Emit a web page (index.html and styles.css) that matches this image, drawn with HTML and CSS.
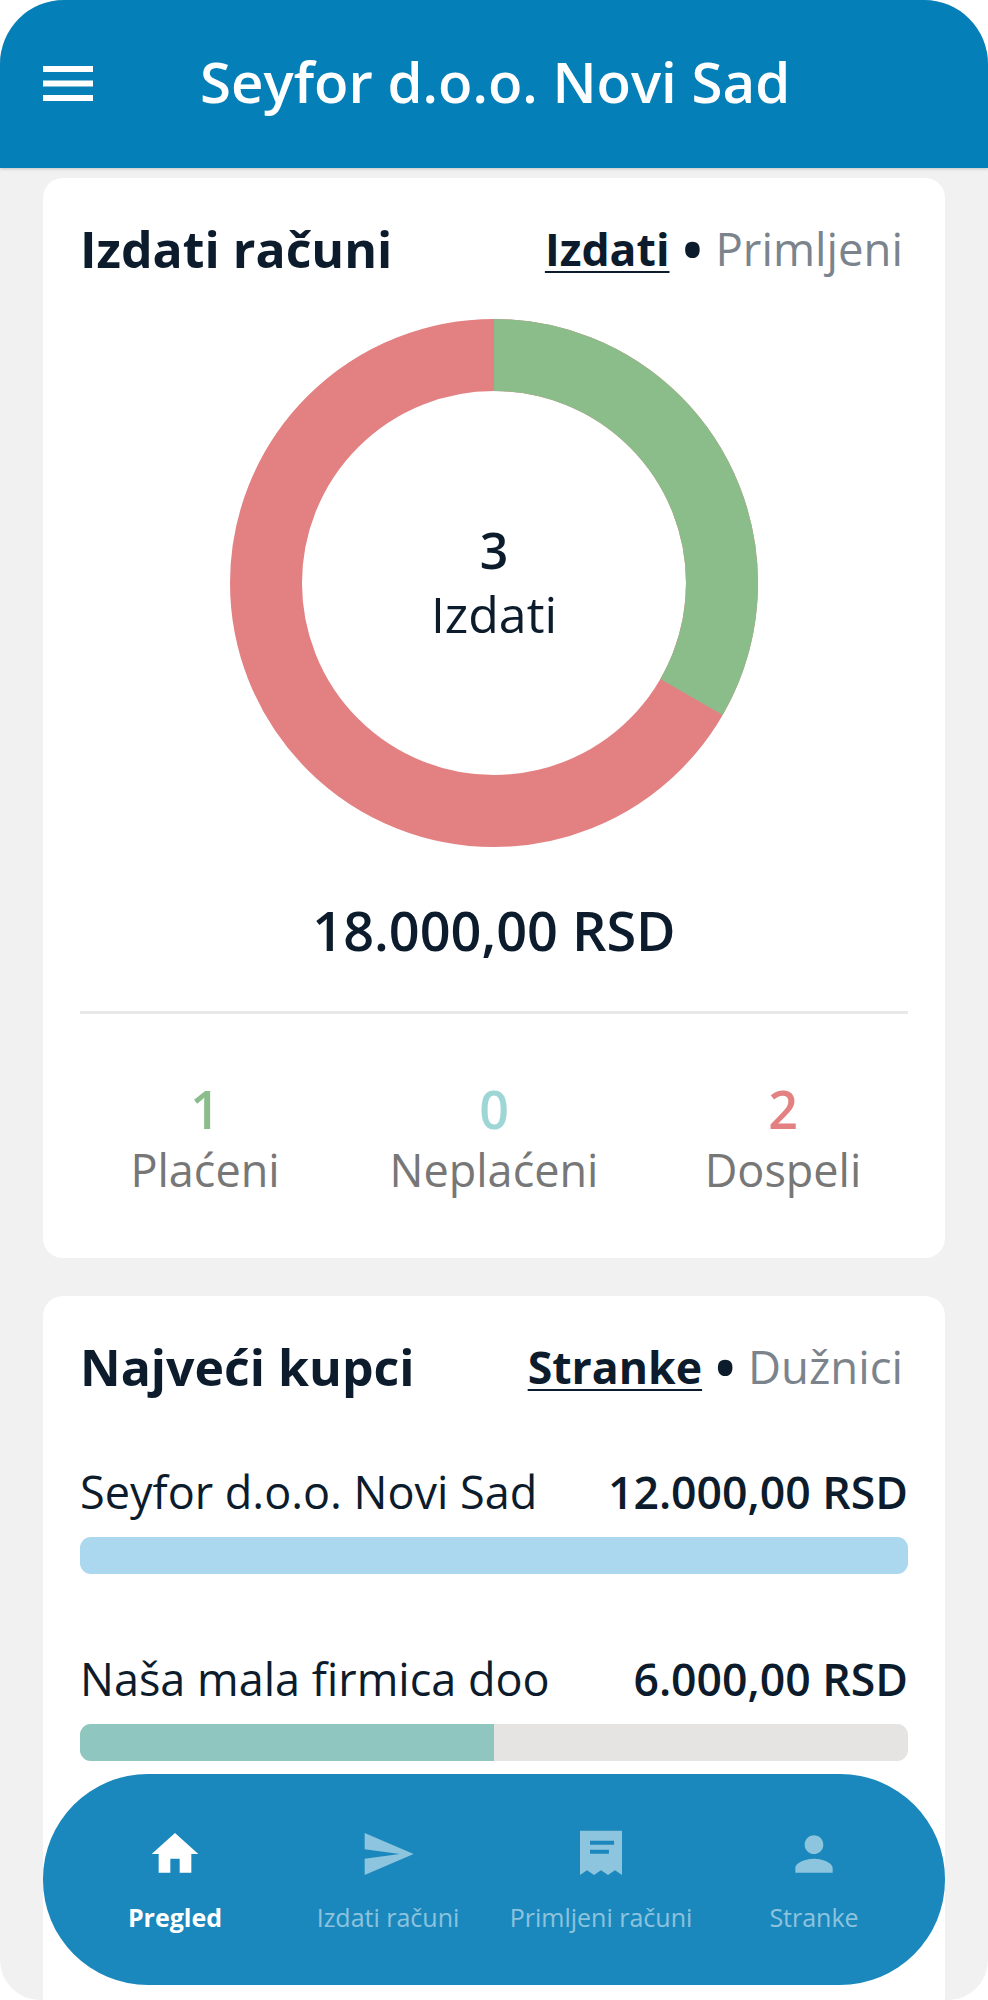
FILE: index.html
```html
<!DOCTYPE html>
<html lang="sr">
<head>
  <meta charset="utf-8">
  <title>Seyfor d.o.o. Novi Sad</title>
  <link rel="stylesheet" href="styles.css">
</head>
<body>
  <div class="screen">
    <header class="topbar">
      <svg class="menu-icon" viewBox="0 0 50 35" aria-hidden="true">
        <rect x="0" y="0" width="50" height="6"></rect>
        <rect x="0" y="14.5" width="50" height="6"></rect>
        <rect x="0" y="29" width="50" height="6"></rect>
      </svg>
      <h1>Seyfor d.o.o. Novi Sad</h1>
    </header>

    <main class="content">
      <section class="card card-invoices">
        <div class="card-head">
          <h2>Izdati računi</h2>
          <div class="tabs"><a class="on">Izdati</a> <span class="dot">•</span> <a>Primljeni</a></div>
        </div>

        <div class="donut">
          <svg viewBox="0 0 528 528" aria-hidden="true">
            <circle class="ring-red" cx="264" cy="264" r="228"></circle>
            <circle class="ring-green" cx="264" cy="264" r="228" pathLength="300" stroke-dasharray="100 200" transform="rotate(-90 264 264)"></circle>
          </svg>
          <div class="donut-label">
            <strong>3</strong>
            <span>Izdati</span>
          </div>
        </div>

        <div class="total">18.000,00 RSD</div>

        <div class="stats">
          <div class="stat"><b class="green">1</b><span>Plaćeni</span></div>
          <div class="stat"><b class="teal">0</b><span>Neplaćeni</span></div>
          <div class="stat"><b class="red">2</b><span>Dospeli</span></div>
        </div>
      </section>

      <section class="card card-buyers">
        <div class="card-head">
          <h2>Najveći kupci</h2>
          <div class="tabs"><a class="on">Stranke</a> <span class="dot">•</span> <a>Dužnici</a></div>
        </div>

        <div class="buyer">
          <div class="buyer-row"><span>Seyfor d.o.o. Novi Sad</span><b>12.000,00 RSD</b></div>
          <div class="bar"><div class="bar-fill blue" style="width:100%"></div></div>
        </div>
        <div class="buyer">
          <div class="buyer-row"><span>Naša mala firmica doo</span><b>6.000,00 RSD</b></div>
          <div class="bar"><div class="bar-fill sea" style="width:50%"></div></div>
        </div>
      </section>
    </main>

    <nav class="tabbar">
      <a class="tab active">
        <svg viewBox="0 0 24 24"><path d="M10 20v-6h4v6h5v-8h3L12 3 2 12h3v8z"></path></svg>
        <span>Pregled</span>
      </a>
      <a class="tab">
        <svg viewBox="0 0 24 24"><path d="M2.01 21L23 12 2.01 3 2 10l15 2-15 2z"></path></svg>
        <span>Izdati računi</span>
      </a>
      <a class="tab">
        <svg viewBox="0 0 24 24"><path fill-rule="evenodd" d="M3 2h18v19l-3-2-3 2-3-2-3 2-3-2-3 2zM7.3 6.3V8h10.3V6.3zm0 3.9v1.7h8.1v-1.7z"></path></svg>
        <span>Primljeni računi</span>
      </a>
      <a class="tab">
        <svg viewBox="0 0 24 24"><path d="M12 12c2.21 0 4-1.79 4-4s-1.79-4-4-4-4 1.79-4 4 1.79 4 4 4zm0 2c-2.67 0-8 1.34-8 4v2h16v-2c0-2.66-5.33-4-8-4z"></path></svg>
        <span>Stranke</span>
      </a>
    </nav>
  </div>
</body>
</html>
```

FILE: styles.css
```css
html, body {
  margin: 0;
  background: #fff;
}
body {
  width: 988px;
  height: 2000px;
  overflow: hidden;
  font-family: "Open Sans", "Noto Sans", sans-serif;
  color: #0c1c2c;
}
h1, h2 {
  margin: 0;
}

.screen {
  position: relative;
  height: 2000px;
  overflow: hidden;
  background: #f1f1f1;
  border-radius: 64px 64px 40px 40px;
}

/* top bar */
.topbar {
  display: flex;
  align-items: center;
  box-sizing: border-box;
  height: 168px;
  padding: 0 0 0 43px;
  background: #057fb7;
  color: #fff;
  box-shadow: 0 1px 3px rgba(0, 0, 0, .2);
}
.menu-icon {
  width: 50px;
  height: 35px;
  margin-bottom: 2px;
  fill: #fff;
}
.topbar h1 {
  margin: 0 0 3px 107px;
  font-size: 56.4px;
  font-weight: 600;
  line-height: 1;
}

/* cards */
.content {
  display: flex;
  flex-direction: column;
  gap: 38px;
  padding: 10px 43px 0;
}
.card {
  box-sizing: border-box;
  background: #fff;
  border-radius: 20px;
  padding: 41px 37px 0;
}
.card-invoices {
  height: 1080px;
}
.card-buyers {
  height: 730px;
}
.card-head {
  display: flex;
  justify-content: space-between;
  align-items: center;
  padding-right: 5px;
}
.card-head h2 {
  font-size: 50px;
  font-weight: 700;
  line-height: 58px;
}
.tabs {
  font-size: 45.5px;
  line-height: 58px;
  color: #7b848c;
}
.tabs .on {
  font-size: 44.6px;
  font-weight: 700;
  color: #0c1c2c;
  text-decoration: underline;
  text-decoration-thickness: 2px;
  text-underline-offset: 5px;
}
.tabs .dot {
  margin: 0 -2px;
  color: #0c1c2c;
  font-size: 70px;
  line-height: 0;
  vertical-align: -9px;
}

/* donut */
.donut {
  position: relative;
  width: 528px;
  height: 528px;
  margin: 41px auto 0;
}
.donut svg {
  display: block;
  width: 528px;
  height: 528px;
  fill: none;
  stroke-width: 72;
}
.ring-red {
  stroke: #e38182;
}
.ring-green {
  stroke: #8bbd8b;
}
.donut-label {
  position: absolute;
  inset: 0;
  display: flex;
  flex-direction: column;
  align-items: center;
  justify-content: center;
  font-size: 50px;
}
.donut-label strong {
  font-size: 50px;
  font-weight: 600;
  line-height: 62px;
}
.donut-label span {
  line-height: 66px;
}

.total {
  margin-top: 50px;
  padding-bottom: 48px;
  border-bottom: 3px solid #e8e8e8;
  font-size: 54px;
  font-weight: 600;
  line-height: 66px;
  text-align: center;
}

/* counters under the donut */
.stats {
  display: grid;
  grid-template-columns: repeat(3, 289px);
  justify-content: center;
  margin-top: 64px;
  text-align: center;
}
.stat b {
  display: block;
  font-size: 52px;
  font-weight: 600;
  line-height: 62px;
}
.stat span {
  display: block;
  font-size: 45px;
  line-height: 60px;
  color: #777;
}
.green { color: #8bbd8b; }
.teal { color: #9ed5d5; }
.red { color: #e38182; }

/* buyers */
.card-buyers .card-head {
  margin-bottom: 67px;
}
.buyer {
  margin-bottom: 76px;
}
.buyer-row {
  display: flex;
  justify-content: space-between;
  align-items: baseline;
  font-size: 45px;
  line-height: 58px;
}
.buyer-row b {
  font-size: 44.6px;
  font-weight: 600;
}
.bar {
  height: 37px;
  margin-top: 16px;
  border-radius: 11px;
  background: #e5e4e2;
  overflow: hidden;
}
.bar-fill {
  height: 100%;
}
.blue { background: #abd8ee; }
.sea { background: #8fc7c0; }

/* floating nav */
.tabbar {
  position: absolute;
  left: 43px;
  right: 43px;
  bottom: 15px;
  height: 211px;
  display: grid;
  grid-template-columns: repeat(4, 213px);
  box-sizing: border-box;
  padding: 52px 0 0 25.5px;
  background: #1a88bc;
  border-radius: 105px;
}
.tab {
  display: flex;
  flex-direction: column;
  align-items: center;
  color: rgba(255, 255, 255, .5);
  font-size: 25px;
  line-height: 34px;
}
.tab svg {
  width: 56px;
  height: 56px;
  fill: currentColor;
  margin-bottom: 18px;
}
.tab.active {
  color: #fff;
  font-weight: 700;
}
```
